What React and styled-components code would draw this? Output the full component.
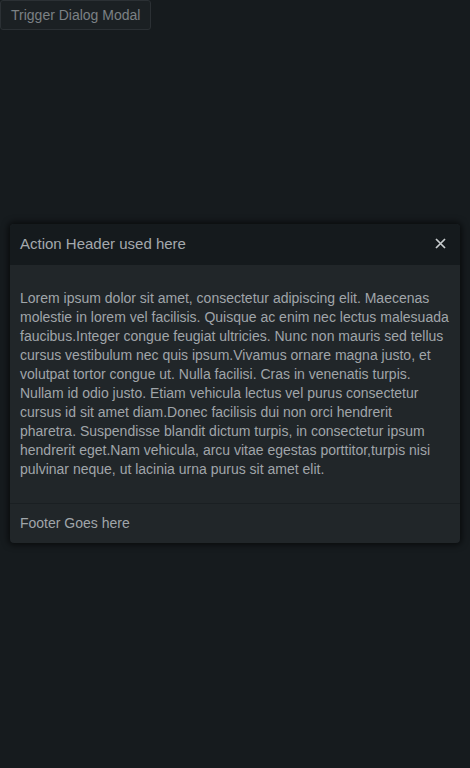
import styled, { createGlobalStyle } from "styled-components";

const GlobalStyle = createGlobalStyle`
  html, body {
    margin: 0;
    padding: 0;
    background: #161b1e;
    font-family: "Liberation Sans", Arial, sans-serif;
  }
`;

const Page = styled.div`
  width: 470px;
  height: 768px;
  background: #161b1e;
  display: flex;
  flex-direction: column;
`;

const Trigger = styled.button`
  align-self: flex-start;
  margin: 0;
  height: 30px;
  padding: 0 10px;
  background: #1b2023;
  border: 1px solid #2b3034;
  border-radius: 3px;
  color: #7c8185;
  font-family: "Liberation Sans", Arial, sans-serif;
  font-size: 14px;
`;

const Overlay = styled.div`
  flex: 1;
  display: flex;
  align-items: flex-start;
  justify-content: center;
  padding-top: 194px;
`;

const Dialog = styled.div`
  width: 450px;
  border-radius: 4px;
  overflow: hidden;
  background: #212629;
  box-shadow: 0 0 6px 2px rgba(0, 0, 0, 0.6);
`;

const Header = styled.div`
  height: 41px;
  box-sizing: border-box;
  padding: 0 10px 2px;
  display: flex;
  align-items: center;
  justify-content: space-between;
  background: #151a1d;
  color: #a4a9ad;
  font-size: 15px;
`;

const Close = styled.button`
  background: none;
  border: none;
  padding: 0;
  width: 20px;
  height: 20px;
  display: flex;
  align-items: center;
  justify-content: center;
  color: #c8ccce;
`;

const Body = styled.div`
  padding: 24px 10px;
  color: #a0a5a9;
  font-size: 14px;
  line-height: 19px;
`;

const Footer = styled.div`
  height: 40px;
  box-sizing: border-box;
  padding: 0 10px 1px;
  display: flex;
  align-items: center;
  border-top: 1px solid #1a1f22;
  color: #a0a5a9;
  font-size: 14px;
`;

export default function App() {
  return (
    <Page>
      <GlobalStyle />
      <Trigger>Trigger Dialog Modal</Trigger>
      <Overlay>
        <Dialog>
          <Header>
            <span>Action Header used here</span>
            <Close>
              <svg width="11" height="11" viewBox="0 0 11 11">
                <path d="M1 1L10 10M10 1L1 10" stroke="currentColor" strokeWidth="1.7" />
              </svg>
            </Close>
          </Header>
          <Body>
            Lorem ipsum dolor sit amet, consectetur adipiscing elit. Maecenas
            molestie in lorem vel facilisis. Quisque ac enim nec lectus malesuada
            faucibus.Integer congue feugiat ultricies. Nunc non mauris sed tellus
            cursus vestibulum nec quis ipsum.Vivamus ornare magna justo, et
            volutpat tortor congue ut. Nulla facilisi. Cras in venenatis turpis.
            Nullam id odio justo. Etiam vehicula lectus vel purus consectetur
            cursus id sit amet diam.Donec facilisis dui non orci hendrerit
            pharetra. Suspendisse blandit dictum turpis, in consectetur ipsum
            hendrerit eget.Nam vehicula, arcu vitae egestas porttitor,turpis nisi
            pulvinar neque, ut lacinia urna purus sit amet elit.
          </Body>
          <Footer>Footer Goes here</Footer>
        </Dialog>
      </Overlay>
    </Page>
  );
}
